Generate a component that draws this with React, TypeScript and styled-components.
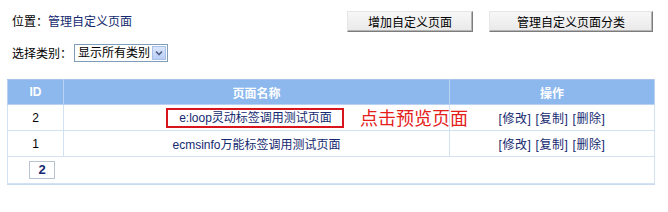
import React from "react";
import styled, { createGlobalStyle } from "styled-components";

const Global = createGlobalStyle`
  html, body { margin: 0; padding: 0; background: #fff; }
  body { font-family: "Liberation Sans", "Noto Sans CJK SC", sans-serif; font-size: 12px; color: #000; }
`;

const Page = styled.div`
  width: 668px;
  height: 212px;
  box-sizing: border-box;
  padding: 11px 13px 0 7px;
`;

const TopBar = styled.div`
  display: flex;
  justify-content: space-between;
  align-items: center;
  height: 21px;
  padding-left: 5px;
`;

const Crumb = styled.div`
  line-height: 16px;
`;

const Link = styled.a`
  color: #14296f;
  text-decoration: none;
`;

const Buttons = styled.div`
  display: flex;
  gap: 16px;
  margin-right: 2px;
`;

const Button = styled.button<{ $w: number }>`
  width: ${(p) => p.$w}px;
  height: 21px;
  padding: 0;
  font-family: "Liberation Sans", "Noto Sans CJK SC", sans-serif;
  font-size: 12px;
  color: #000;
  background: linear-gradient(#f7f7f7, #e9e9e9);
  border: 1px solid;
  border-color: #e6e6e6 #7c7c7c #7c7c7c #e6e6e6;
  box-shadow: inset -1px -1px 0 #b4b4b4;
`;

const FilterRow = styled.div`
  display: flex;
  align-items: center;
  margin-top: 11px;
  height: 19px;
  padding-left: 5px;
  white-space: nowrap;
`;

const Select = styled.div`
  display: flex;
  align-items: stretch;
  width: 94px;
  height: 18px;
  box-sizing: border-box;
  border: 1px solid #7f9db9;
  background: #fff;
  margin-left: 2px;
`;

const SelectText = styled.div`
  flex: 1;
  padding-left: 3px;
  line-height: 16px;
  white-space: nowrap;
  overflow: hidden;
`;

const Arrow = styled.div`
  width: 14px;
  flex: none;
  margin: 1px;
  background: linear-gradient(#dbe6fb, #b9cdf5);
  border: 1px solid #a9bfe8;
  box-sizing: border-box;
  display: flex;
  align-items: center;
  justify-content: center;
`;

const Table = styled.table`
  margin-top: 17px;
  width: 648px;
  border-collapse: collapse;
  border: 1px solid #a7c4e8;
  box-shadow: 0 1px 0 #c9daee;
  table-layout: fixed;
`;

const Th = styled.th<{ $w?: number }>`
  ${(p) => (p.$w ? `width: ${p.$w}px;` : "")}
  height: 24px;
  background: #8db8ee;
  color: #fff;
  font-weight: bold;
  font-size: 12px;
  text-align: center;
  border: 1px solid #b9d2f1;
  border-top: 1px solid #a7c4e8;
  padding: 0;
`;

const Td = styled.td<{ $rel?: boolean }>`
  height: 25px;
  text-align: center;
  border: 1px solid #d3e2f3;
  padding: 0;
  ${(p) => (p.$rel ? "position: relative;" : "")}
`;

const PagerCell = styled.td`
  height: 26px;
  padding: 0 0 0 21px;
  border: 1px solid #d3e2f3;
`;

const PageBox = styled.span`
  display: inline-block;
  width: 24px;
  height: 16px;
  line-height: 16px;
  text-align: center;
  border: 1px solid #b8c4d2;
  color: #14296f;
  font-weight: bold;
  font-size: 13px;
`;

const Boxed = styled.span`
  display: inline-block;
  border: 2px solid #d8141c;
  padding: 1px 10px 1px 11px;
  margin-right: 3px;
  line-height: 14px;
`;

const Note = styled.span`
  position: absolute;
  left: 296px;
  top: 0px;
  color: #e5201a;
  font-size: 18px;
  line-height: 24px;
  font-family: "Noto Sans CJK SC", sans-serif;
  white-space: nowrap;
`;

const Ops = styled.span`
  color: #14296f;
  letter-spacing: 0.6px;
`;

const rows = [
  { id: 2, name: "e:loop灵动标签调用测试页面", boxed: true },
  { id: 1, name: "ecmsinfo万能标签调用测试页面", boxed: false },
];

export default function App() {
  return (
    <>
      <Global />
      <Page>
        <TopBar>
          <Crumb>
            位置：<Link href="#">管理自定义页面</Link>
          </Crumb>
          <Buttons>
            <Button $w={126}>增加自定义页面</Button>
            <Button $w={164}>管理自定义页面分类</Button>
          </Buttons>
        </TopBar>
        <FilterRow>
          选择类别：
          <Select>
            <SelectText>显示所有类别</SelectText>
            <Arrow>
              <svg width="8" height="6" viewBox="0 0 8 6">
                <path d="M1 1.5 L4 4.5 L7 1.5" stroke="#4d6185" strokeWidth="1.6" fill="none" />
              </svg>
            </Arrow>
          </Select>
        </FilterRow>
        <Table>
          <thead>
            <tr>
              <Th $w={55}>ID</Th>
              <Th $w={385}>页面名称</Th>
              <Th>操作</Th>
            </tr>
          </thead>
          <tbody>
            {rows.map((r) => (
              <tr key={r.id}>
                <Td>{r.id}</Td>
                <Td $rel={r.boxed}>
                  {r.boxed ? (
                    <>
                      <Boxed>
                        <Link href="#">{r.name}</Link>
                      </Boxed>
                      <Note>点击预览页面</Note>
                    </>
                  ) : (
                    <Link href="#">{r.name}</Link>
                  )}
                </Td>
                <Td>
                  <Ops>[修改] [复制] [删除]</Ops>
                </Td>
              </tr>
            ))}
            <tr>
              <PagerCell colSpan={3}>
                <PageBox>2</PageBox>
              </PagerCell>
            </tr>
          </tbody>
        </Table>
      </Page>
    </>
  );
}
